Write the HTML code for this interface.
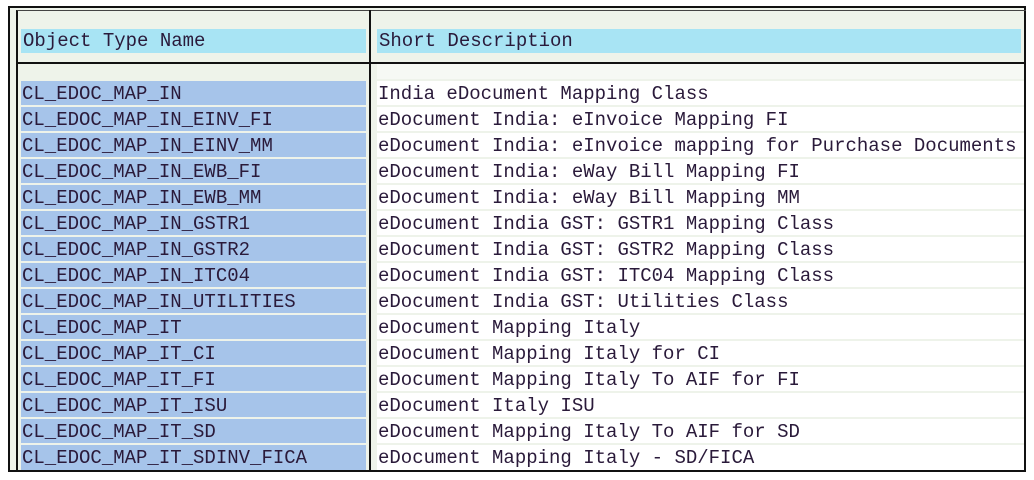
<!DOCTYPE html>
<html><head><style>
body{margin:0;width:1034px;height:480px;background:#fff;position:relative;overflow:hidden;font-family:"Liberation Mono",monospace;font-size:19px;color:#2a1a3a}
.outer{position:absolute;left:8px;top:6px;width:1018px;height:466px;border:2px solid #111;box-sizing:border-box;background:#eef3ea}
.inner{position:absolute;left:16px;top:10px;width:1010px;height:462px;border-left:2px solid #111;border-top:1px solid #444;box-sizing:border-box}
.hl{position:absolute;left:16px;top:62px;width:1010px;height:2px;background:#111}
.vl{position:absolute;left:369px;top:10px;width:2px;height:462px;background:#111}
.h{position:absolute;top:29px;height:24px;background:#a8e4f4;line-height:25px;padding-left:2px;box-sizing:border-box}
.r{position:absolute;height:24px;line-height:26px;padding-left:1px;box-sizing:border-box;white-space:pre}
.l{left:21px;width:345px;background:#a6c4ea}
.d{left:377px;width:647px;background:#fff}
</style></head><body>
<div class="outer"></div><div class="inner"></div><div class="hl"></div><div class="vl"></div>
<div class="h" style="left:21px;width:345px">Object Type Name</div>
<div class="h" style="left:377px;width:644px">Short Description</div>
<div class="r d" style="top:64px;height:15px;background:#f6f9f4"></div>
<div class="r l" style="top:81px">CL_EDOC_MAP_IN</div><div class="r d" style="top:81px">India eDocument Mapping Class</div>
<div class="r l" style="top:107px">CL_EDOC_MAP_IN_EINV_FI</div><div class="r d" style="top:107px">eDocument India: eInvoice Mapping FI</div>
<div class="r l" style="top:133px">CL_EDOC_MAP_IN_EINV_MM</div><div class="r d" style="top:133px">eDocument India: eInvoice mapping for Purchase Documents</div>
<div class="r l" style="top:159px">CL_EDOC_MAP_IN_EWB_FI</div><div class="r d" style="top:159px">eDocument India: eWay Bill Mapping FI</div>
<div class="r l" style="top:185px">CL_EDOC_MAP_IN_EWB_MM</div><div class="r d" style="top:185px">eDocument India: eWay Bill Mapping MM</div>
<div class="r l" style="top:211px">CL_EDOC_MAP_IN_GSTR1</div><div class="r d" style="top:211px">eDocument India GST: GSTR1 Mapping Class</div>
<div class="r l" style="top:237px">CL_EDOC_MAP_IN_GSTR2</div><div class="r d" style="top:237px">eDocument India GST: GSTR2 Mapping Class</div>
<div class="r l" style="top:263px">CL_EDOC_MAP_IN_ITC04</div><div class="r d" style="top:263px">eDocument India GST: ITC04 Mapping Class</div>
<div class="r l" style="top:289px">CL_EDOC_MAP_IN_UTILITIES</div><div class="r d" style="top:289px">eDocument India GST: Utilities Class</div>
<div class="r l" style="top:315px">CL_EDOC_MAP_IT</div><div class="r d" style="top:315px">eDocument Mapping Italy</div>
<div class="r l" style="top:341px">CL_EDOC_MAP_IT_CI</div><div class="r d" style="top:341px">eDocument Mapping Italy for CI</div>
<div class="r l" style="top:367px">CL_EDOC_MAP_IT_FI</div><div class="r d" style="top:367px">eDocument Mapping Italy To AIF for FI</div>
<div class="r l" style="top:393px">CL_EDOC_MAP_IT_ISU</div><div class="r d" style="top:393px">eDocument Italy ISU</div>
<div class="r l" style="top:419px">CL_EDOC_MAP_IT_SD</div><div class="r d" style="top:419px">eDocument Mapping Italy To AIF for SD</div>
<div class="r l" style="top:445px;height:25px">CL_EDOC_MAP_IT_SDINV_FICA</div><div class="r d" style="top:445px;height:25px">eDocument Mapping Italy - SD/FICA</div>
</body></html>
